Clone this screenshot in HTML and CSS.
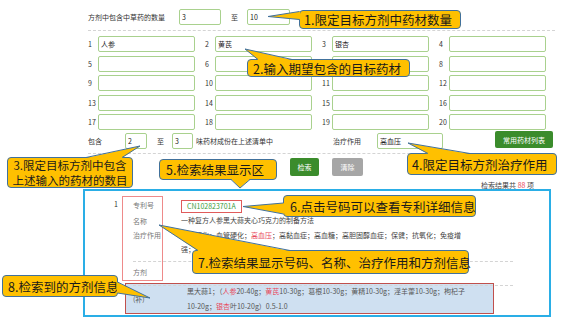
FILE: index.html
```html
<!DOCTYPE html>
<html lang="zh-CN">
<head>
  <meta charset="UTF-8" />
  <meta name="viewport" content="width=device-width, initial-scale=1.0" />
  <title>复方检索</title>
  <link rel="stylesheet" href="styles.css">
</head>
<body>
  <div class="page">
    <div class="form">
      <div class="count-row">
        <span class="count-lbl">方剂中包含中草药的数量</span>
        <input class="field w-min" value="3" />
        <span class="to">至</span>
        <input class="field w-max" value="10" />
      </div>
      <div class="divider"></div>

      <div class="herb-grid">
        <div class="herb"><span class="num">1</span><input class="field" value="人参" /></div>
        <div class="herb"><span class="num">2</span><input class="field" value="黄芪" /></div>
        <div class="herb"><span class="num">3</span><input class="field" value="银杏" /></div>
        <div class="herb"><span class="num">4</span><input class="field" /></div>
        <div class="herb"><span class="num">5</span><input class="field" /></div>
        <div class="herb"><span class="num">6</span><input class="field" /></div>
        <div class="herb"><span class="num">7</span><input class="field" /></div>
        <div class="herb"><span class="num">8</span><input class="field" /></div>
        <div class="herb"><span class="num">9</span><input class="field" /></div>
        <div class="herb"><span class="num">10</span><input class="field" /></div>
        <div class="herb"><span class="num">11</span><input class="field" /></div>
        <div class="herb"><span class="num">12</span><input class="field" /></div>
        <div class="herb"><span class="num">13</span><input class="field" /></div>
        <div class="herb"><span class="num">14</span><input class="field" /></div>
        <div class="herb"><span class="num">15</span><input class="field" /></div>
        <div class="herb"><span class="num">16</span><input class="field" /></div>
        <div class="herb"><span class="num">17</span><input class="field" /></div>
        <div class="herb"><span class="num">18</span><input class="field" /></div>
        <div class="herb"><span class="num">19</span><input class="field" /></div>
        <div class="herb"><span class="num">20</span><input class="field" /></div>
      </div>

      <div class="include-row">
        <span class="inc-lbl">包含</span>
        <input class="field w-inc" value="2" />
        <span class="to inc-to">至</span>
        <input class="field w-inc2" value="3" />
        <span class="inc-text">味药材成份在上述清单中</span>
        <span class="cure-lbl">治疗作用</span>
        <input class="field w-cure" value="高血压" />
        <button class="btn btn-green btn-list">常用药材列表</button>
      </div>
      <div class="divider div-2"></div>

      <div class="actions">
        <button class="btn btn-green btn-search">检索</button>
        <button class="btn btn-grey btn-clear">清除</button>
      </div>
    </div>

    <div class="total">检索结果共 <em>88</em> 项</div>

    <div class="results">
      <div class="mark-labels"></div>
      <div class="item">
        <span class="idx">1</span>
        <span class="key">专利号</span>
        <span class="val"><a class="pno" href="#">CN102823701A</a></span>

        <span class="key k-2">名称</span>
        <span class="val">一种复方人参黑大蒜夹心巧克力的制备方法</span>

        <span class="key k-3">治疗作用</span>
        <span class="val cure">动脉硬化；血管硬化；<em>高血压</em>；高黏血症；高血糖；高胆固醇血症；保健；抗氧化；免疫增<br>强；癌症；治疗</span>

        <div class="recipe-row"><span class="key">方剂</span></div>
      </div>
      <div class="recipe">
        <span class="tag">(补)</span>
        <span class="dose">黑大蒜1；（<em>人参</em>20-40g；<em>黄芪</em>10-30g；葛根10-30g；黄精10-30g；淫羊藿10-30g；枸杞子<br>10-20g；<em>银杏</em>叶10-20g）0.5-1.0</span>
      </div>
    </div>

    <div class="note n1">1.限定目标方剂中药材数量</div>
    <div class="note n2">2.输入期望包含的目标药材</div>
    <div class="note n3">3.限定目标方剂中包含<br>上述输入的药材的数目</div>
    <div class="note n4">4.限定目标方剂治疗作用</div>
    <div class="note n5">5.检索结果显示区</div>
    <div class="note n6">6.点击号码可以查看专利详细信息</div>
    <div class="note n7">7.检索结果显示号码、名称、治疗作用和方剂信息</div>
    <div class="note n8">8.检索到的方剂信息</div>

    <svg class="tails" width="572" height="324" viewBox="0 0 572 324">
      <g class="tail-fill">
        <polygon points="300,11.5 268,16.5 300,19.5" />
        <polygon points="258,60 245,49 292,60" />
        <polygon points="86,158 140,146 122,158" />
        <polygon points="428,154 408,143 470,154" />
        <polygon points="231,179 240,188 250,179" />
        <polygon points="284,203 243,206.5 284,214" />
        <polygon points="198,251 159,225 290,251" />
        <polygon points="117,282 150,298 117,293" />
      </g>
      <g class="tail-line">
        <polyline points="299.5,11.5 268,16.5 299.5,19.5" />
        <polyline points="258,59.5 245,49 292,59.5" />
        <polyline points="86,157.5 140,146 122,157.5" />
        <polyline points="428,153.5 408,143 470,153.5" />
        <polyline points="231,179.5 240,188 250,179.5" />
        <polyline points="283.5,203 243,206.5 283.5,214" />
        <polyline points="198,250.5 159,225 290,250.5" />
        <polyline points="117.5,282 150,298 117.5,293" />
      </g>
    </svg>
  </div>
</body>
</html>
```

FILE: styles.css
```css
* { box-sizing: border-box; }
body {
  margin: 0;
  background: #fff;
  color: #333;
  font-family: "Noto Sans CJK SC", "Noto Sans", sans-serif;
  font-size: 7px;
}
.page {
  position: relative;
  width: 572px; height: 324px;
  overflow: hidden;
}

/* search form */
.form { margin-left: 88px; width: 467px; padding-top: 9px; }
.field {
  height: 16px; margin: 0; padding: 0 2px;
  border: 1px solid #a9d18e; border-radius: 2px;
  background: #fff; color: #222;
  font: 7px "Noto Sans CJK SC", sans-serif;
  outline: none;
}
.count-row, .include-row { display: flex; align-items: center; height: 16px; }
.count-lbl { width: 91px; }
.w-min { width: 42px; }
.to { margin-left: 10px; width: 7px; }
.w-max { width: 43px; margin-left: 9px; }
.divider { border-top: 1px dashed #d4d4d4; margin: 5px 0 5px; }

.herb-grid {
  display: grid;
  grid-template-columns: repeat(4, 117px);
  grid-auto-rows: 16px;
  row-gap: 3.5px;
}
.herb { display: flex; align-items: center; }
.num { width: 10px; }
.herb .field { width: 97px; }

.include-row { margin-top: 3px; }
.inc-lbl { width: 37px; }
.w-inc { width: 22px; }
.inc-to { margin-left: 10px; }
.w-inc2 { width: 21px; margin-left: 8px; }
.inc-text { margin-left: 3px; }
.cure-lbl { margin-left: 60px; }
.w-cure { width: 66px; margin-left: 16px; }

.btn {
  border: 0; border-radius: 2px; padding: 0;
  color: #fff; font: 7px "Noto Sans CJK SC", sans-serif;
}
.btn-green { background: #3b8c2c; }
.btn-grey { background: #a6a6a6; }
.btn-list { width: 58px; height: 17px; margin-left: 52px; margin-top: -3px; }
.div-2 { margin: 4px 0 4px; }
.actions { display: flex; gap: 13px; padding-left: 202px; }
.btn-search { width: 29px; height: 18px; }
.btn-clear { width: 31px; height: 18px; }

.total {
  margin-top: 6px; height: 7px; line-height: 7px;
  text-align: right; padding-right: 38px; color: #444;
}
.total em { font-style: normal; color: #e8495a; }

/* results */
.results {
  position: relative;
  margin-left: 83px; width: 468px; height: 128px;
  border: 2px solid #2aaee6;
  padding: 8px 0 0 25px;
}
.mark-labels {
  position: absolute; left: 37px; top: 5px;
  width: 41px; height: 85px;
  border: 1px solid #ee8a8a;
}
.item {
  display: grid;
  grid-template-columns: 23px 48px 332px;
  color: #444;
}
.idx { padding-left: 4px; line-height: 11px; color: #333; }
.key { color: #777; line-height: 13px; }
.k-2, .k-3 { line-height: 14px; }
.val { line-height: 14px; white-space: nowrap; }
.item .val:first-of-type { line-height: 13px; }
.k-2 { grid-column: 2; margin-top: 1px; }
.k-3 { grid-column: 2; }
.val em, .recipe em { font-style: normal; color: #e8495a; }
.pno {
  display: inline-block; height: 13px; line-height: 11px;
  padding: 0 5px; border: 1px solid #e05b5b;
  color: #3a9a3a; text-decoration: none;
}
.recipe-row {
  grid-column: 2 / 4;
  margin-top: 5px; padding: 3px 0 6px;
  border-top: 1px dashed #d4d4d4;
  border-bottom: 1px dashed #d4d4d4;
}
.recipe-row .key { line-height: 14px; }
.recipe {
  display: flex; align-items: center;
  margin: -3px 0 0 15px; width: 369px; height: 31px;
  background: #cfe0f1; border: 1px solid #c0504d;
  color: #555;
}
.tag { width: 61px; padding-left: 7px; }
.dose { line-height: 15px; white-space: nowrap; }

/* callouts */
.note {
  position: absolute;
  display: flex; align-items: center;
  padding-left: 4px;
  background: #ffc000;
  border: 1px solid #41719c; border-radius: 4px;
  color: #1a1a1a;
  font-size: 12.5px; white-space: nowrap;
}
.n1 { left: 299px; top: 10px; width: 162px; height: 19px; }
.n2 { left: 247px; top: 59px; width: 163px; height: 18px; padding-left: 5px; }
.n3 {
  left: 7px; top: 157px; width: 126px; height: 31px;
  justify-content: center; text-align: center; padding: 0;
  font-size: 11.5px; line-height: 14.5px;
}
.n4 { left: 407px; top: 153px; width: 150px; height: 22px; }
.n5 { left: 159px; top: 159px; width: 118px; height: 21px; padding-left: 6px; }
.n6 { left: 283px; top: 195px; width: 193px; height: 22px; padding-left: 6px; }
.n7 { left: 192px; top: 250px; width: 277px; height: 24px; padding-left: 5px; }
.n8 { left: 2px; top: 275px; width: 116px; height: 22px; padding-left: 5px; }

.tails { position: absolute; left: 0; top: 0; pointer-events: none; }
.tail-fill polygon { fill: #ffc000; }
.tail-line polyline { fill: none; stroke: #41719c; stroke-width: 1; }
```
